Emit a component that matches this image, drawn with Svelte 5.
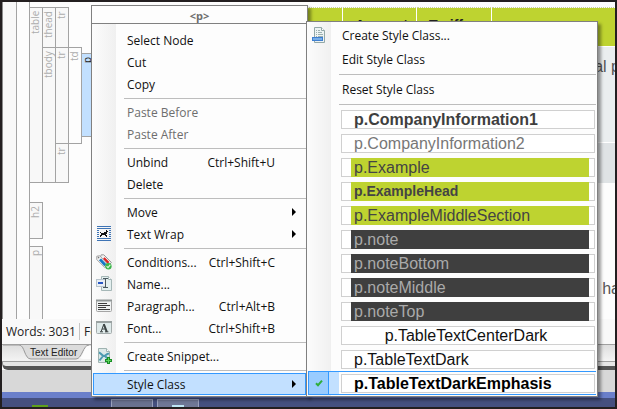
<script>
  const menu = [
    { label: 'Select Node' },
    { label: 'Cut' },
    { label: 'Copy' },
    null,
    { label: 'Paste Before', disabled: true },
    { label: 'Paste After', disabled: true },
    null,
    { label: 'Unbind', keys: 'Ctrl+Shift+U' },
    { label: 'Delete' },
    null,
    { label: 'Move', sub: true },
    { label: 'Text Wrap', sub: true, icon: 'wrap' },
    null,
    { label: 'Conditions...', keys: 'Ctrl+Shift+C', icon: 'conditions' },
    { label: 'Name...', icon: 'name' },
    { label: 'Paragraph...', keys: 'Ctrl+Alt+B', icon: 'paragraph' },
    { label: 'Font...', keys: 'Ctrl+Shift+B', icon: 'font' },
    null,
    { label: 'Create Snippet...', icon: 'snippet' },
    null,
    { label: 'Style Class', sub: true, open: true }
  ];

  const styles = [
    { name: 'p.CompanyInformation1', look: 'heavy' },
    { name: 'p.CompanyInformation2', look: 'muted' },
    { name: 'p.Example', look: 'lime' },
    { name: 'p.ExampleHead', look: 'lime head' },
    { name: 'p.ExampleMiddleSection', look: 'lime' },
    { name: 'p.note', look: 'dark' },
    { name: 'p.noteBottom', look: 'dark' },
    { name: 'p.noteMiddle', look: 'dark' },
    { name: 'p.noteTop', look: 'dark' },
    { name: 'p.TableTextCenterDark', look: 'center' },
    { name: 'p.TableTextDark', look: '' },
    { name: 'p.TableTextDarkEmphasis', look: 'strong', checked: true }
  ];
</script>

{#snippet icon(name)}
  <svg class="icon" viewBox="0 0 16 16" width="16" height="16" aria-hidden="true">
    {#if name === 'wrap'}
      <g shape-rendering="crispEdges">
        <path fill="#3f74b5" d="M1 0h14v1H1zM1 2h14v1H1zM1 12h14v1H1zM1 14h14v1H1zM1 4h2v1H1zM1 6h2v1H1zM1 8h2v1H1zM1 10h2v1H1zM13 4h2v1h-2zM13 6h2v1h-2zM13 8h2v1h-2zM13 10h2v1h-2z" />
        <path fill="#111" d="M10 4h1v1h1v1h-1v2h-1v1h1v2h-1v-1h-1V9H6v1H5v1H4V9h1V7H4V6h1v1h3V6h2z" />
      </g>
    {:else if name === 'conditions'}
      <path d="M5.2.8h2.6l7.6 7.6-3.4 4L4 4.6z" fill="#f1f1f1" stroke="#9a9a9a" />
      <path d="M7.6 4.2 12.4 9" stroke="#e02323" stroke-width="2.8" />
      <path d="M.8 2.2 3.8 1.8 11.6 10.2 8.8 13.6 .8 5.6z" fill="#f4f4f4" stroke="#a2a2a2" />
      <path d="M4 5.4 9.4 11.2" stroke="#1578c6" stroke-width="2.8" />
      <circle cx="2.6" cy="3.6" r=".8" fill="#777" />
      <circle cx="12.4" cy="12.2" r="3.2" fill="#3cb54a" />
      <path d="m10.6 12.2 1.4 1.5 2.4-3" fill="none" stroke="#d9f5d9" stroke-width="1.2" />
    {:else if name === 'name'}
      <path d="M5.5.5h7l3 3v11h-10z" fill="#e3efef" stroke="#a5b7b7" />
      <path d="M12.5.5v3h3" fill="#fff" stroke="#a5b7b7" />
      <rect x=".5" y="3.5" width="9" height="7" fill="#e8eef4" stroke="#b8c4cc" />
      <rect x="2" y="6" width="5" height="2" fill="#2857c4" />
      <path d="M7 2.5h5M7 11.5h5M9.5 2.5v9" stroke="#4b5a60" fill="none" />
    {:else if name === 'paragraph'}
      <rect x=".5" y="2.5" width="15" height="11" rx="1" fill="#f0f3f3" stroke="#a4a4a4" />
      <path d="M0 2.5h16" stroke="#909696" stroke-width="2" />
      <path d="M2 5.5h9M2 7.5h12M2 9.5h8M2 11.5h12" stroke="#3d3d3d" />
    {:else if name === 'font'}
      <rect x=".5" y="1.5" width="15" height="12" rx="1" fill="#dfeaea" stroke="#a4acac" />
      <path d="M0 2h16" stroke="#9aa2a2" stroke-width="2" />
      <path d="M7.8 4.2 5 11.8" fill="none" stroke="#3c4444" stroke-width="1" />
      <path d="M7.8 4.2 10.8 11.8" fill="none" stroke="#3c4444" stroke-width="2" />
      <path d="M6 9h4M4 11.8h3M9 11.8h3.4" stroke="#3c4444" />
    {:else if name === 'snippet'}
      <path d="M2.5.5h8l3 3v11h-11z" fill="#dce9e8" stroke="#9fb3b1" />
      <path d="M10.5.5v3h3" fill="#fff" stroke="#9fb3b1" />
      <path d="M3 4.5C5 5 6 8 8 8s3-3 5-2M3.5 12.5 7 8M12 11 9 8" fill="none" stroke="#4c9ab0" stroke-width="2" />
      <path d="M12.5 9v7M9 12.5h7" stroke="#178f24" stroke-width="3" />
      <path d="M12.5 10v5M10 12.5h5" stroke="#5fd35f" />
    {:else if name === 'create'}
      <path d="M3.5.5h7l3 3v12h-10z" fill="#edf3f3" stroke="#93a8a8" />
      <path d="M10.5.5v3h3" fill="#fff" stroke="#93a8a8" />
      <path d="M5 3.5h1M7 3.5h2M5 5.5h1M7 5.5h4M5 7.5h1M7 7.5h5M5 9.5h1M7 9.5h5" stroke="#9bb0b0" />
      <rect x="1.5" y="10.5" width="10" height="3" fill="#77aee8" stroke="#3f7fd0" />
    {/if}
  </svg>
{/snippet}

<div class="screen">
  <div class="workspace">
    <div class="gutter"></div>
    <div class="gutter plain"></div>
    <div class="tree">
      <span class="tag table">table</span>
      <span class="tag thead">thead</span>
      <span class="tag tr1">tr</span>
      <span class="tag tbody">tbody</span>
      <span class="tag tr2">tr</span>
      <span class="tag td">td</span>
      <span class="tag p">p</span>
      <span class="tag tr3">tr</span>
      <span class="tag h2">h2</span>
      <span class="tag p2">p</span>
    </div>
    <div class="doc">
      <table>
        <thead>
          <tr><th class="first"></th><th class="c2">Amount</th><th class="c3">Tariff</th><th></th></tr>
        </thead>
        <tbody>
          <tr class="r1"><td colspan="4">al p</td></tr>
          <tr class="r2"><td colspan="4"></td></tr>
        </tbody>
      </table>
      <p class="para">ha</p>
    </div>
  </div>
  <div class="status"><span>Words: 3031</span><span class="cell">Font</span></div>
  <div class="tabs">
    <svg class="tabshape" viewBox="0 0 92 17" width="92" height="17" aria-hidden="true">
      <path d="M0 0h16c6 0 5 14 12 14h45c6 0 7-14 13-14" fill="#dcdcdc" stroke="#999" />
      <path d="M76 13c4 0 5-12 9-12h7v13H80z" fill="#fdfdfd" />
    </svg>
    <button class="tab">Text Editor</button>
  </div>
  <div class="edge"></div>
  <div class="desk"></div>
  <div class="glass"></div>
  <div class="taskbar"><i class="start"></i><i class="task"></i><i class="task lit"></i></div>

  <div class="menu main" role="menu">
    <div class="title">&lt;p&gt;</div>
    <div class="list">
      {#each menu as item}
        {#if item}
          <button class="item" class:open={item.open} disabled={item.disabled} role="menuitem">
            <span class="slot">{#if item.icon}{@render icon(item.icon)}{/if}</span>
            <span class="label">{item.label}</span>
            {#if item.keys}<span class="keys">{item.keys}</span>{/if}
            {#if item.sub}<span class="arrow"></span>{/if}
          </button>
        {:else}
          <div class="sep" role="separator"></div>
        {/if}
      {/each}
    </div>
  </div>

  <div class="menu sub" role="menu">
    <div class="list">
      <button class="item" role="menuitem">
        <span class="slot">{@render icon('create')}</span><span class="label">Create Style Class...</span>
      </button>
      <button class="item" role="menuitem"><span class="slot"></span><span class="label">Edit Style Class</span></button>
      <div class="sep" role="separator"></div>
      <button class="item" role="menuitem"><span class="slot"></span><span class="label">Reset Style Class</span></button>
      <div class="sep" role="separator"></div>
      {#each styles as s}
        <button class="style" class:checked={s.checked} role="menuitemradio" aria-checked={!!s.checked}>
          <span class="mark">
            {#if s.checked}
              <svg viewBox="0 0 8 8" width="8" height="8" aria-hidden="true"><path d="M1 4.2 3 6.2 7 1.6" fill="none" stroke="#2fae3c" stroke-width="2" /></svg>
            {/if}
          </span>
          <span class="frame"><span class="sample {s.look}">{s.name}</span></span>
        </button>
      {/each}
    </div>
  </div>
</div>

<style>
  :global(body) {
    margin: 0;
    background: #231f20;
  }

  .screen {
    position: relative;
    box-sizing: border-box;
    height: 100vh;
    border: 2px solid #231f20;
    background: #fdfdfd;
    display: flex;
    flex-direction: column;
    overflow: hidden;
    font-family: 'Open Sans', 'Noto Sans', sans-serif;
    font-size: 12px;
    color: #111;
  }

  button {
    margin: 0;
    padding: 0;
    border: 0;
    background: none;
    font: inherit;
    color: inherit;
    text-align: left;
  }

  .workspace {
    flex: 1;
    min-height: 0;
    display: flex;
    overflow: hidden;
    border-left: 1px solid #8c8c8c;
  }

  .gutter {
    flex: none;
    width: 13px;
    border-right: 1px solid #a3a3a3;
    background: #f8f8f8;
  }

  .gutter.plain {
    width: 12px;
    border: 0;
    background: #fdfdfd;
  }

  .tree {
    flex: none;
    border-left: 1px solid #a3a3a3;
    padding-top: 5px;
    display: grid;
    grid-template-columns: repeat(5, 13px);
    grid-template-rows: 40px 6px 83px 7px 39px 20px 36px 8px 1fr;
  }

  .tag {
    margin: 0 0 -1px -1px;
    border: 1px solid #a3a3a3;
    background: #f8f8f8;
    color: #adadad;
    writing-mode: vertical-rl;
    transform: rotate(180deg);
    text-align: right;
    font-size: 10px;
    line-height: 11px;
    padding-bottom: 3px;
    overflow: hidden;
  }

  .table { grid-area: 1 / 1 / 6 / 2; }
  .thead { grid-area: 1 / 2 / 2 / 3; }
  .tr1 { grid-area: 1 / 3 / 2 / 4; }
  .tbody { grid-area: 2 / 2 / 6 / 3; }
  .tr2 { grid-area: 2 / 3 / 5 / 4; }
  .td { grid-area: 2 / 4 / 5 / 5; background: #fdfdfd; }
  .p { grid-area: 3 / 5 / 4 / 6; background: #c2e0ff; color: #222; }
  .tr3 { grid-area: 5 / 3 / 6 / 4; }
  .h2 { grid-area: 7 / 1 / 8 / 2; }
  .p2 { grid-area: 9 / 1 / 10 / 2; }

  .doc {
    flex: 1;
    margin-right: -5px;
    padding-top: 5px;
    font: 16px/20px 'Liberation Sans', Arial, sans-serif;
    color: #555;
    text-align: right;
  }

  table {
    width: 100%;
    border-collapse: collapse;
    table-layout: fixed;
  }

  th {
    box-sizing: border-box;
    height: 39px;
    padding: 7px 0 0 12px;
    vertical-align: top;
    border-left: 1px solid #fff;
    border-top: 1px dotted #c9cfa0;
    background: #bed330;
    color: #222;
    font-size: 14px;
    text-align: left;
  }

  .first { width: 247px; }
  .c2 { width: 74px; }
  .c3 { width: 75px; }

  td {
    box-sizing: border-box;
    padding: 10px 0 0;
    vertical-align: top;
    border-top: 1px solid #fff;
    background: #eaeeef;
  }

  .r1 td { height: 96px; }
  .r2 td { height: 40px; background: #dfe3e5; }

  .para { margin: 96px 0 0; }

  .status {
    flex: none;
    display: flex;
    align-items: center;
    height: 25px;
    padding-left: 4px;
    background: #f9f9f9;
    color: #222;
  }

  .cell {
    margin-left: 3px;
    padding-left: 4px;
    border-left: 1px solid #c4c4c4;
  }

  .tabs {
    flex: none;
    position: relative;
    box-sizing: border-box;
    height: 18px;
    border: solid #a0a0a0;
    border-width: 1px 0;
    background: linear-gradient(#dedede, #f4f4f4);
    display: flex;
  }

  .tabshape {
    position: absolute;
    left: 1px;
    top: 0;
  }

  .tab {
    position: relative;
    padding-left: 28px;
    font: 10px/16px 'Liberation Sans', Arial, sans-serif;
    color: #222;
  }

  .edge {
    flex: none;
    height: 4px;
    border-bottom: 4px solid #555;
    border-left: 1px solid #8c8c8c;
    border-bottom-left-radius: 6px;
    background: #e6e6e6;
  }

  .desk {
    flex: none;
    height: 22px;
    background: #d8d8d8;
  }

  .glass {
    flex: none;
    height: 6px;
    background: #6a7fca;
  }

  .taskbar {
    flex: none;
    display: flex;
    align-items: flex-end;
    height: 9px;
    background: #45507f;
  }

  .start {
    width: 16px;
    height: 2px;
    margin: 0 63px 0 30px;
    background: #5fa01c;
  }

  .task {
    box-sizing: border-box;
    width: 42px;
    height: 8px;
    margin-right: 4px;
    border: 1px solid #9aa1bd;
    border-bottom: 0;
    background: #69718f;
  }

  .lit {
    background: linear-gradient(#bfe6f5, #bfe6f5) center bottom / 12px 2px no-repeat #6f7796;
  }

  .menu {
    position: absolute;
    box-sizing: border-box;
    border: 1px solid #808080;
    background: linear-gradient(90deg, #fcfcfc, #f0f0f0) left / 24px 100% no-repeat #fdfdfd;
    box-shadow: 3px 3px 3px rgba(0, 0, 0, 0.4);
  }

  .main {
    left: 89px;
    top: 3px;
    width: 217px;
  }

  .sub {
    left: 304px;
    top: 19px;
    width: 292px;
  }

  .title {
    height: 17px;
    border-bottom: 1px solid #808080;
    background: #fdfdfd;
    color: #6e6e6e;
    font: bold 11px/20px 'Open Sans', sans-serif;
    text-align: center;
  }

  .main .list {
    padding: 5px 1px 1px;
  }

  .sub .list {
    padding: 1px;
  }

  .item {
    box-sizing: border-box;
    display: flex;
    align-items: center;
    width: 100%;
    height: 22px;
    border: 1px solid transparent;
    color: #111;
  }

  .sub .item {
    height: 24px;
  }

  .item:disabled {
    color: #6e6e6e;
  }

  .open {
    border-color: #3399ff;
    background: #c2e0ff;
  }

  .slot {
    flex: none;
    width: 31px;
    height: 16px;
    padding-left: 2px;
  }

  .icon {
    display: block;
  }

  .label {
    flex: 1;
    white-space: nowrap;
  }

  .keys {
    margin-right: 30px;
  }

  .arrow {
    margin-right: 9px;
    border: 4px solid transparent;
    border-left-color: #000;
    border-right: 0;
  }

  .sep {
    height: 1px;
    margin: 3px 0 2px 31px;
    background: #bdbdbd;
  }

  .style {
    box-sizing: border-box;
    display: flex;
    align-items: center;
    width: 100%;
    height: 24px;
    border: solid transparent;
    border-width: 1px 0;
  }

  .style.checked {
    border-color: #3399ff;
    background: linear-gradient(90deg, #c2e0ff 31px, #fdfdfd 31px);
  }

  .mark {
    box-sizing: border-box;
    flex: none;
    display: flex;
    align-items: center;
    justify-content: center;
    width: 21px;
    height: 22px;
    margin-right: 12px;
  }

  .checked .mark {
    border: solid #3399ff;
    border-width: 0 1px;
    background: #99ccff;
  }

  .frame {
    box-sizing: border-box;
    flex: 1;
    height: 19px;
    margin-right: 1px;
    padding: 0 6px 0 10px;
    box-shadow: inset 0 0 0 1px #d0d0d0;
    background: #fff;
  }

  .sample {
    display: block;
    padding-left: 3px;
    font: 16px/19px 'Liberation Sans', Arial, sans-serif;
    color: #111;
    white-space: nowrap;
  }

  .heavy { font-weight: bold; color: #3f3f3f; }
  .muted { color: #777; }
  .lime { background: #bed330; color: #444; }
  .head { font-weight: bold; font-size: 14px; }
  .dark { background: #3f3f3f; color: #aaa; }
  .center { text-align: center; padding: 0 8px 0 0; }
  .strong { font-weight: bold; color: #000; }
</style>
